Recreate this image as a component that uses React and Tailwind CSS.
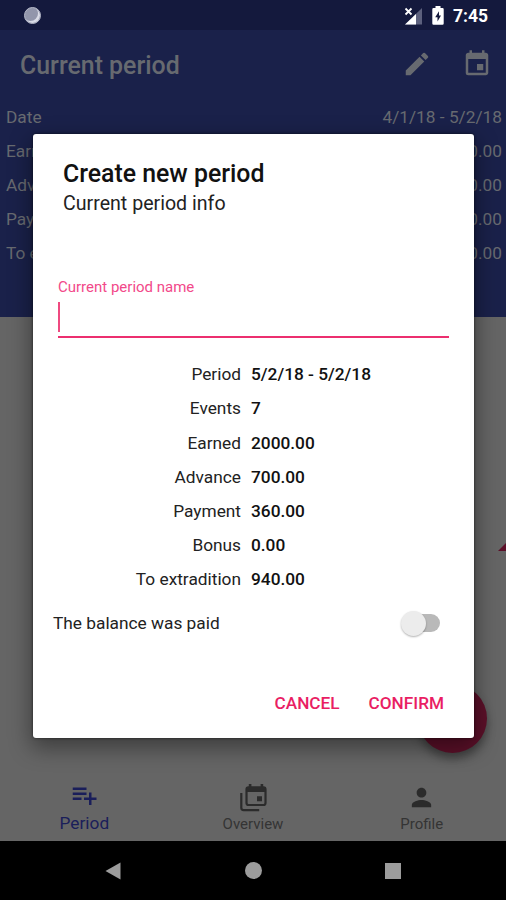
import { useState } from 'react';
import { MdEdit, MdEvent, MdPerson, MdPlaylistAdd } from 'react-icons/md';

const headerRows = [
  { label: 'Date', value: '4/1/18 - 5/2/18' },
  { label: 'Earned', value: '2000.00' },
  { label: 'Advance', value: '700.00' },
  { label: 'Payment', value: '360.00' },
  { label: 'To extradition', value: '940.00' },
];

const periodInfo = [
  { label: 'Period', value: '5/2/18 - 5/2/18' },
  { label: 'Events', value: '7' },
  { label: 'Earned', value: '2000.00' },
  { label: 'Advance', value: '700.00' },
  { label: 'Payment', value: '360.00' },
  { label: 'Bonus', value: '0.00' },
  { label: 'To extradition', value: '940.00' },
];

function StatusBar() {
  return (
    <div className="h-[30px] shrink-0 bg-[#14193d] flex items-center pl-[24px] pr-[18px]">
      <div className="w-[17px] h-[17px] rounded-full bg-[#9296ab] border border-[#b6b9c9] shadow-[inset_-2px_-2px_0_#d9dbe6]" />
      <svg className="ml-auto" width="19" height="19" viewBox="0 0 19 19">
        <path d="M18 2v16.500H1z" fill="#5c607d" />
        <path d="M12 8V18.500H1z" fill="#fff" />
        <path d="M1.500 2.500l6 6M7.500 2.500l-6 6" stroke="#fff" strokeWidth="1.800" />
      </svg>
      <svg className="ml-[9px]" width="12" height="19" viewBox="0 0 12 19">
        <path d="M3.500 0h5v2H10.500a1.200 1.200 0 0 1 1.200 1.200V17.500A1.200 1.200 0 0 1 10.500 18.700H1.500A1.200 1.200 0 0 1 .3 17.500V3.200A1.200 1.200 0 0 1 1.500 2h2z" fill="#fff" />
        <path d="M7 5.200L3.200 11.200h2.300v4.300l3.500-6H7z" fill="#14193d" />
      </svg>
      <span className="ml-[9px] mt-[3px] text-[17.500px] font-bold leading-none text-white">7:45</span>
    </div>
  );
}

function OverviewIcon() {
  return (
    <svg width="29" height="29" viewBox="0 0 29 29" fill="none">
      <path d="M2.300 10v14.800a2.300 2.300 0 0 0 2.300 2.300h15.600" stroke="#2b2b2b" strokeWidth="2.200" />
      <rect x="7.500" y="4.400" width="19" height="17.600" rx="2" stroke="#2b2b2b" strokeWidth="2.200" />
      <path d="M7.500 4h19v5h-19z M9.800 1h2.600v4H9.800z M21.600 1h2.600v4h-2.600z M18 13.300h5v5h-5z" fill="#2b2b2b" />
    </svg>
  );
}

function BottomTabs() {
  return (
    <div className="h-[70px] shrink-0 flex text-[#343434]">
      <div className="flex-1 flex flex-col items-center text-[#1a1e5a]">
        <MdPlaylistAdd size={30} className="mt-[9px]" />
        <span className="text-[17.300px] leading-5 mt-[3px]">Period</span>
      </div>
      <div className="flex-1 flex flex-col items-center">
        <div className="mt-[12px]"><OverviewIcon /></div>
        <span className="text-[15px] leading-5 mt-[2px]">Overview</span>
      </div>
      <div className="flex-1 flex flex-col items-center">
        <MdPerson size={29} className="mt-[12px] text-[#2b2b2b]" />
        <span className="text-[15px] leading-5 mt-[2px]">Profile</span>
      </div>
    </div>
  );
}

function SystemNav() {
  return (
    <div className="h-[59px] shrink-0 bg-black flex items-center justify-center gap-[123px]">
      <svg width="17" height="18" viewBox="0 0 17 18" fill="#9c9c9c">
        <path d="M0.500 9L15.500 0.500v17z" />
      </svg>
      <div className="w-[17px] h-[17px] rounded-full bg-[#9c9c9c]" />
      <div className="w-[16px] h-[16px] bg-[#9c9c9c]" />
    </div>
  );
}

function PeriodDialog() {
  const [name, setName] = useState('');
  const [paid, setPaid] = useState(false);

  return (
    <div className="absolute left-[33px] top-[134px] w-[441px] h-[604px] rounded-[3px] bg-white flex flex-col text-[#222] shadow-[0_8px_22px_2px_rgba(0,0,0,0.4),0_0_3px_rgba(0,0,0,0.6)]">
      <h2 className="mt-[25px] ml-[30px] text-[24.850px] leading-[30px] font-medium text-[#111]">Create new period</h2>
      <p className="ml-[30px] text-[19.600px] leading-6 mt-[3px]">Current period info</p>

      <div className="mt-[61px] ml-[25px] w-[391px]">
        <label htmlFor="period-name" className="block text-[15px] leading-5 text-[#f2498a]">Current period name</label>
        <div className="h-[41px] border-b-2 border-[#ec2f6f] flex items-center">
          <div className="w-[2px] h-[30px] mt-px bg-[#ef4a80]" />
          <input
            id="period-name"
            value={name}
            onChange={(e) => setName(e.target.value)}
            className="flex-1 outline-none text-lg"
          />
        </div>
      </div>

      <div className="mt-[20px]">
        {periodInfo.map((row) => (
          <div key={row.label} className="h-[34.200px] flex items-center gap-[10px] text-[17.300px]">
            <span className="w-[208px] text-right">{row.label}</span>
            <span className="font-medium text-[#111]">{row.value}</span>
          </div>
        ))}
      </div>

      <div className="mt-[12px] ml-[20px] mr-[34px] flex items-center justify-between">
        <span className="text-[17.300px] leading-7">The balance was paid</span>
        <button type="button" role="switch" aria-checked={paid} onClick={() => setPaid(!paid)} className="flex items-center w-[39px]">
          <span className="w-[25px] h-[25px] shrink-0 rounded-full bg-[#ececec] shadow-[0_1px_2px_rgba(0,0,0,0.3)] z-10" />
          <span className="-ml-[16px] w-[30px] h-[18px] shrink-0 rounded-full bg-[#b9b9b9]" />
        </button>
      </div>

      <div className="mt-auto mb-[21px] pr-[30px] flex justify-end gap-[29px] text-[17.200px] leading-7 font-medium text-[#e91e63]">
        <button type="button">CANCEL</button>
        <button type="button">CONFIRM</button>
      </div>
    </div>
  );
}

export default function App() {
  return (
    <div className="relative w-[506px] h-[900px] overflow-hidden flex flex-col bg-[#656565] font-[Roboto,sans-serif]">
      <StatusBar />
      <header className="h-[287px] shrink-0 bg-[#1a214a] text-[#676a70]">
        <div className="h-[70.500px] flex items-center pl-[20px] pr-[14px]">
          <h1 className="text-[24.900px] font-medium">Current period</h1>
          <MdEdit size={30} className="ml-auto -mt-[2px]" />
          <MdEvent size={30} className="ml-[30px] -mt-[3px]" />
        </div>
        {headerRows.map((row) => (
          <div key={row.label} className="h-[34.200px] flex items-center justify-between pl-[6px] pr-[4px] text-[17.300px]">
            <span>{row.label}</span>
            <span>{row.value}</span>
          </div>
        ))}
      </header>

      <main className="flex-1 relative">
        <svg className="absolute right-0 top-[225px]" width="8" height="9" viewBox="0 0 8 9">
          <path d="M0 9L8 1v8z" fill="#5c1029" />
        </svg>
        <div className="absolute right-[19px] bottom-[18px] w-[69px] h-[69px] rounded-full bg-[#5c1029] shadow-[0_6px_10px_rgba(0,0,0,0.35)]" />
      </main>

      <BottomTabs />
      <SystemNav />
      <PeriodDialog />
    </div>
  );
}
